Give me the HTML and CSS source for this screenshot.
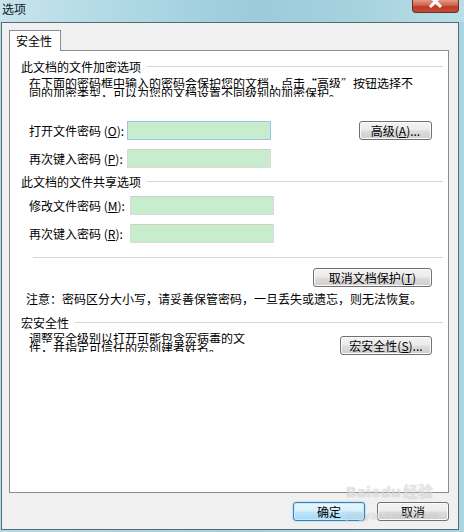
FILE: index.html
```html
<!DOCTYPE html>
<html lang="zh-CN">
<head>
  <meta charset="UTF-8">
  <title>选项</title>
  <link rel="stylesheet" href="styles.css">
</head>
<body>

  <div class="titlebar">
    <span class="title">选项</span>
    <span class="close">
      <svg width="45" height="12" viewBox="0 0 45 12">
        <path d="M17 -4 L28 7 M28 -4 L17 7" stroke="#fff" stroke-width="3" fill="none"/>
      </svg>
    </span>
  </div>

  <div class="window">
    <div class="tabs">
      <span class="tab">安全性</span>
    </div>

    <div class="panel">
      <!-- 加密 -->
      <div class="legend">此文档的文件加密选项</div>
      <div class="desc">
        <div class="line">在下面的密码框中输入的密码会保护您的文档，点击“高级”按钮选择不</div>
        <div class="line over">同的加密类型，可以为您的文档设置不同级别的加密保护。</div>
      </div>

      <div class="field first">
        <label>打开文件密码 (<u>O</u>):</label>
        <span class="pwd focus"></span>
        <button class="btn adv">高级(<u>A</u>)...</button>
      </div>
      <div class="field">
        <label>再次键入密码 (<u>P</u>):</label>
        <span class="pwd"></span>
      </div>

      <!-- 共享 -->
      <div class="legend second">此文档的文件共享选项</div>
      <div class="field share">
        <label>修改文件密码 (<u>M</u>):</label>
        <span class="pwd"></span>
      </div>
      <div class="field share">
        <label>再次键入密码 (<u>R</u>):</label>
        <span class="pwd"></span>
      </div>

      <div class="sep"></div>

      <div class="unprotect">
        <button class="btn wide">取消文档保护(<u>T</u>)</button>
      </div>

      <p class="note">注意：密码区分大小写，请妥善保管密码，一旦丢失或遗忘，则无法恢复。</p>

      <!-- 宏 -->
      <div class="legend third">宏安全性</div>
      <div class="macro">
        <div class="desc">
          <div class="line">调整安全级别以打开可能包含宏病毒的文</div>
          <div class="line over">件，并指定可信任的宏创建者姓名。</div>
        </div>
        <button class="btn macro-btn">宏安全性(<u>S</u>)...</button>
      </div>
    </div>

    <div class="actions">
      <button class="btn primary">确定</button>
      <button class="btn">取消</button>
    </div>
  </div>

  <div class="watermark">
    <span class="wm-logo">Bai<span class="paw">&#x2740;</span>du<span class="wm-cn">经验</span></span>
    <span class="wm-url">jingyan.baidu.com</span>
  </div>

</body>
</html>
```

FILE: styles.css
```css
/* Window frame */
body {
  margin: 0;
  width: 464px;
  height: 532px;
  overflow: hidden;
  position: relative;
  background: linear-gradient(90deg, #b4dbe6, #a3d0de 50%, #aad5e2);
  font-family: "Noto Sans CJK SC", "Noto Sans", sans-serif;
  font-size: 12px;
  color: #000;
}

.titlebar {
  height: 22px;
  display: flex;
  justify-content: space-between;
  align-items: flex-start;
  background: linear-gradient(90deg, #c8e4ed 0%, #b0d9e5 25%, #9ccbd9 55%, #a8d3df 80%, #bcdfe8 100%);
}

.title {
  padding: 2px 0 0 2px;
  font-size: 12px;
  line-height: 14px;
  color: #0e1a2a;
}

.close {
  width: 45px;
  height: 12px;
  margin-right: 5px;
  border: 1px solid #6a3028;
  border-top: none;
  border-radius: 0 0 4px 4px;
  background: linear-gradient(#e29a88, #d0604b 45%, #bd3d28 55%, #c44a33);
  overflow: hidden;
  display: block;
}

.close svg {
  display: block;
}

.window {
  box-sizing: border-box;
  margin: 0 5px 0 1px;
  height: 508px;
  border: 1px solid #566a77;
  background: #f0f0f0;
  padding: 7px 9px 0 7px;
}

/* Tab */
.tabs {
  display: flex;
  position: relative;
  z-index: 1;
}

.tab {
  box-sizing: border-box;
  width: 52px;
  height: 21px;
  border: 1px solid #898c95;
  border-bottom: none;
  background: #fff;
  padding-left: 6px;
  line-height: 19px;
  margin-bottom: -1px;
}

.panel {
  box-sizing: border-box;
  width: 440px;
  height: 443px;
  border: 1px solid #898c95;
  background: #fff;
  padding: 10px 5px 0 11px;
}

/* Group headings */
.legend {
  display: flex;
  align-items: flex-start;
  gap: 6px;
  height: 12px;
  line-height: 12px;
  white-space: nowrap;
}

.legend::after {
  content: "";
  flex: 1;
  height: 1px;
  margin-top: 5px;
  background: #d6d6ca;
}

.legend.second {
  margin-top: 8px;
}

.legend.third {
  margin-top: 12px;
}

/* Two-line static text, squeezed as in the dialog */
.desc {
  height: 19px;
  overflow: hidden;
  margin: 5px 0 0 8px;
  white-space: nowrap;
}

.desc .line {
  height: 10px;
  line-height: 10px;
}

.desc .over {
  width: max-content;
  background: #fff;
  position: relative;
}

/* Password rows */
.field {
  display: flex;
  align-items: center;
  height: 19px;
  margin: 9px 11px 0 8px;
}

.field.first {
  margin-top: 24px;
}

.legend.second + .field {
  margin-top: 8px;
}

.field label {
  width: 98px;
  white-space: nowrap;
  line-height: 12px;
}

.field.share label {
  width: 101px;
}

.pwd {
  box-sizing: border-box;
  width: 144px;
  height: 19px;
  border: 1px solid #dadada;
  border-top-color: #cfcfcf;
  background: #c7edcc;
}

.pwd.focus {
  border-color: #9cc3e7;
}

u {
  text-decoration-thickness: 1px;
  text-underline-offset: 1px;
}

/* Buttons */
.btn {
  box-sizing: border-box;
  height: 19px;
  padding: 0;
  border: 1px solid #707070;
  border-radius: 3px;
  background: linear-gradient(#f3f3f3 0%, #ebebeb 48%, #dddddd 52%, #cfcfcf 100%);
  box-shadow: inset 0 0 0 1px #fbfbfb;
  font-family: inherit;
  font-size: 12px;
  line-height: 16px;
  color: #000;
}

.btn.adv {
  width: 73px;
  margin-left: auto;
}

.sep {
  height: 1px;
  margin: 14px 0 0 12px;
  background: #d6d6ca;
}

.unprotect {
  display: flex;
  justify-content: flex-end;
  margin: 10px 11px 0 0;
}

.btn.wide {
  width: 119px;
}

.note {
  margin: 6px 0 0 5px;
  line-height: 12px;
  white-space: nowrap;
}

.macro {
  display: flex;
  align-items: flex-start;
  margin: 2px 11px 0 0;
}

.macro .desc {
  margin-top: 2px;
}

.btn.macro-btn {
  width: 92px;
  margin: 5px 0 0 auto;
}

/* Dialog buttons */
.actions {
  display: flex;
  justify-content: flex-end;
  gap: 12px;
  width: 440px;
  margin-top: 9px;
}

.actions .btn {
  width: 72px;
  height: 19px;
}

.btn.primary {
  border-color: #3c7fb1;
  background: linear-gradient(#eaf6fd 0%, #d9f0fc 48%, #bee6fd 52%, #a7d9f5 100%);
  box-shadow: inset 0 0 0 1px #c5e8fb, 0 0 2px #6fc0ea;
}

/* Baidu watermark over the dialog */
.watermark {
  position: absolute;
  left: 346px;
  top: 478px;
  display: flex;
  flex-direction: column;
  color: rgba(255, 255, 255, 0.5);
  text-shadow: 0 0 1px rgba(120, 120, 120, 0.45);
  pointer-events: none;
}

.wm-logo {
  font-family: "DejaVu Sans", sans-serif;
  font-size: 14px;
  font-weight: bold;
  line-height: 26px;
  white-space: nowrap;
}

.paw {
  font-size: 12px;
}

.wm-cn {
  font-family: "Noto Sans CJK SC", sans-serif;
  font-size: 15px;
  margin-left: 2px;
}

.wm-url {
  font-family: "DejaVu Sans", sans-serif;
  font-size: 10px;
  line-height: 12px;
  margin-top: 4px;
}
```
